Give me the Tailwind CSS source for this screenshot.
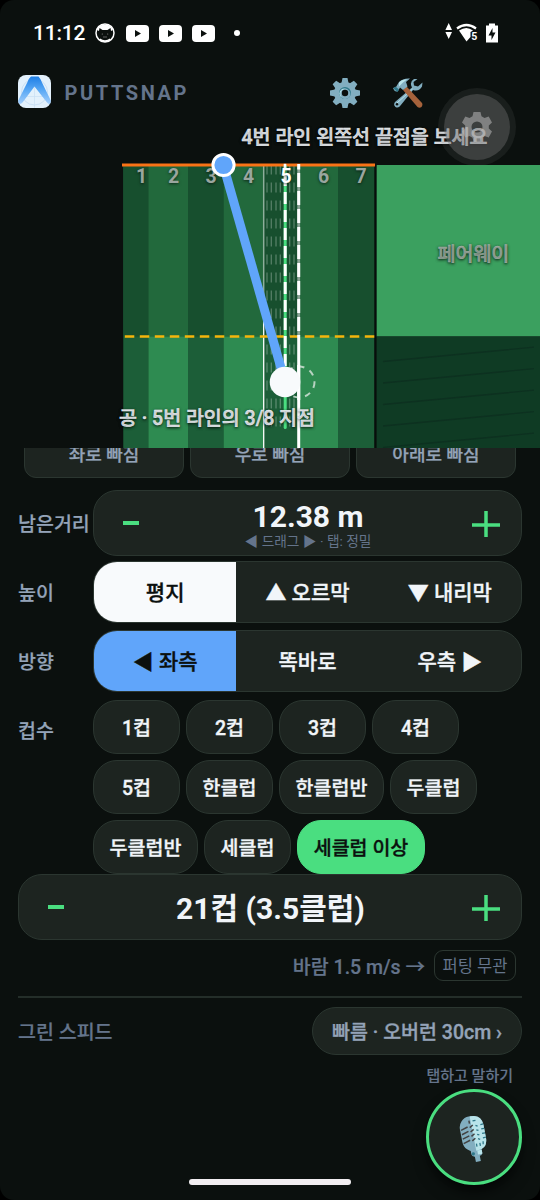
<!DOCTYPE html>
<html lang="ko">
<head>
<meta charset="utf-8">
<title>PuttSnap</title>
<script src="https://cdn.jsdelivr.net/npm/@tailwindcss/browser@4"></script>
</head>
<body class="bg-black">
<div class="relative flex h-[1200px] w-[540px] flex-col overflow-hidden rounded-[14px] bg-[#0b100e] font-['Roboto','Noto_Sans_CJK_KR',sans-serif] text-[19.5px] leading-none font-medium text-[#f1f5f9]">

  <!-- Status bar -->
  <div class="flex h-[66px] shrink-0 items-center pl-[33px] pr-[41px] text-white">
    <span class="w-[62px] text-[21px] font-medium tracking-[-0.2px]">11:12</span>
    <svg class="h-5 w-5" viewBox="0 0 20 20"><circle cx="10" cy="10" r="9" fill="#0b100e" stroke="#fff" stroke-width="1.500"/><path d="M2 7A8.600 8.600 0 0 1 18 7L16 8 15.500 5 12.500 7H7.500L4.500 5 4 8z" fill="#fff"/><path d="M5 15.500q5 3.500 10 0v2l-5 1.500-5-1.500z" fill="#fff"/><circle cx="7.300" cy="11" r=".6" fill="#888"/><circle cx="12.700" cy="11" r=".6" fill="#888"/><path d="M8 14h4" stroke="#777" stroke-width=".8"/></svg>
    <svg class="ml-[11px] h-[17px] w-[23px]" viewBox="0 0 23 17"><rect width="23" height="17" rx="4" fill="#fff"/><path d="M9 5l6 3.500L9 12z" fill="#0b100e"/></svg>
    <svg class="ml-[10px] h-[17px] w-[23px]" viewBox="0 0 23 17"><rect width="23" height="17" rx="4" fill="#fff"/><path d="M9 5l6 3.500L9 12z" fill="#0b100e"/></svg>
    <svg class="ml-[10px] h-[17px] w-[23px]" viewBox="0 0 23 17"><rect width="23" height="17" rx="4" fill="#fff"/><path d="M9 5l6 3.500L9 12z" fill="#0b100e"/></svg>
    <span class="ml-[19px] h-[6px] w-[6px] rounded-full bg-white"></span>
    <span class="flex-1"></span>
    <svg class="h-[20px] w-[54px]" viewBox="445 22 54 20"><path d="M448.700 22l3.300 7h-6.600zM448.700 38l3.300-7h-6.600z" fill="#fff"/><path d="M457 27.500q9.500-7 19 0" fill="none" stroke="#fff" stroke-width="2.200"/><path d="M459 29.500q7.500-5 14 0l-2.500 1.500v5l-4 4.500z" fill="#fff"/><text x="471.300" y="38.800" fill="#fff" font-size="10.500" font-weight="700">5</text><path d="M489 22.500h6v2h3v17h-12v-17h3z" fill="#fff"/><path d="M492.500 27l-4 7.500h3V39l4-7.500h-3z" fill="#0b100e"/></svg>
  </div>

  <!-- Header -->
  <div class="flex h-[54px] shrink-0 items-center pl-[18px] pr-[116px]">
    <svg class="-mt-[3px] h-[33px] w-[33px]" viewBox="0 0 33 33"><defs><linearGradient id="lg" x2="0" y2="1"><stop stop-color="#1f7fe6"/><stop offset=".5" stop-color="#5aa9f5"/><stop offset="1" stop-color="#a5cffb"/></linearGradient><clipPath id="lc"><rect width="33" height="33" rx="8"/></clipPath></defs><g clip-path="url(#lc)"><rect width="33" height="33" fill="#e3f1fc"/><circle cx="16.500" cy="17" r="13" fill="none" stroke="#c4dcf3" stroke-width=".8"/><path d="M16.500 12v21M3 21.500h27" stroke="#c9dff3" stroke-width=".7"/><path d="M13 1.500h7.500q2 2 3.500 6L33 26v3q-2 1-4-1.500L16.500 11.500 4.500 27.500Q2 30 0 28.500V26L9.500 7q1.500-4 3.500-5.500z" fill="url(#lg)"/></g></svg>
    <span class="ml-[13.5px] -mt-[1px] text-[20px] font-bold tracking-[2.6px] text-[#64748b]">PUTTSNAP</span>
    <span class="flex-1"></span>
    <svg class="-mt-[1px] h-[30px] w-[30px]" viewBox="-15 -15 30 30"><g fill="#82aec0"><circle r="11"/><g id="t"><path d="M-2.500-15h5l1 5h-7zM-2.500 15h5l1-5h-7z"/><path d="M-15-2.500v5l5 1v-7zM15-2.500v5l-5 1v-7z"/></g><use href="#t" transform="rotate(45)"/></g><circle r="6" fill="#2f7889"/><circle r="5" cx="-.6" cy=".5" fill="#b9e4ea"/><circle r="5" cx=".4" cy="1" fill="#82aec0"/><circle r="3.200" fill="#0b100e"/></svg>
    <svg class="-mt-[1px] ml-[33px] mr-[1px] h-[30px] w-[30px]" viewBox="0 0 30 30"><path d="M21 1q-5 3-2 8.500L2 24q-2 3 .5 5 3 1.500 5-1.500L20 12q6 2 9-3.500l.5-4-4.500 4-4-1-.5-3.500 4-3z" fill="#82aec0"/><path d="M4 25L19.500 11" stroke="#b9e4ea"/><circle cx="4" cy="26.200" r="1.200" fill="#0b100e"/><path d="M10 12l3.500-3.500L29 25q1 2-.5 4-2 1.500-4 0z" fill="#a6623b"/><path d="M0 10l3-1 3-5Q10 0 17 .5L13 4l1.500 4.500L10 12 7 9.500 5 13q-3 2-5-3z" fill="#82aec0"/><path d="M6 4.500Q9 1 14 1.500l-4 3-4 4z" fill="#b9e4ea"/><path d="M.5 10.500l4 3.500 1.500-2.500-3.500-3z" fill="#2f7889"/></svg>
  </div>

  <!-- Green map -->
  <svg class="h-[328px] w-[540px] shrink-0" viewBox="0 120 540 328">
    <path d="M123 166H376.500V448H123z" fill="#164a2c"/>
    <g fill="#174f2e"><path d="M124 166h24.500v170.500H124zM188 166h35.700v170.500H188zM263.700 166H299v170.500h-35.300zM338 166h36v170.500h-36z"/></g>
    <g fill="#22693c"><path d="M148.500 166H188v170.500h-39.500zM223.700 166h40v170.500h-40zM299 166h39v170.500h-39z"/></g>
    <g fill="#1c5e38"><path d="M124 336.500h24.500V448H124zM188 336.500h35.700V448H188zM263.700 336.500H299V448h-35.300zM338 336.500h36V448h-36z"/></g>
    <g fill="#2e8b51"><path d="M148.500 336.500H188V448h-39.500zM223.700 336.500h40V448h-40zM299 336.500h39V448h-39z"/></g>
    <path d="M374.300 165h2.400v283h-2.400z" fill="#080d0b"/>
    <path d="M376.700 165H540v171.500H376.700z" fill="#3ba05f"/>
    <path d="M376.700 336.500H540V448H376.700z" fill="#0f3b24"/>
    <path d="M383 361.500L534 347.200M383 383L534 368.700M383 404.500L534 390.200M383 426L534 411.700M383 447.500L534 433.200" stroke="#0d3120" stroke-width="1.300"/>
    <path d="M267 164.500V429M271.300 164.500V429M276 164.500V429M280.300 164.500V429M289.700 164.500V429M294 164.500V429" stroke="#fff" stroke-opacity=".27" stroke-width="1.300" stroke-dasharray="10 8"/>
    <path d="M263.700 166V319" stroke="#fff" stroke-opacity=".5" stroke-width="1.500"/><path d="M263.700 319V448" stroke="#fff" stroke-width="1.300"/>
    <path d="M124.800 336.500H375" stroke="#f5b50c" stroke-width="2.400" stroke-dasharray="9.500 5.500"/>
    <path d="M122 165H375" stroke="#f97316" stroke-width="3"/>
    <path d="M285.200 166V427.500" stroke="#4ade80" stroke-width="3" stroke-linecap="round"/>
    <path d="M285 163.800V168" stroke="#fff" stroke-width="2.600"/><path d="M285.200 174V370" stroke="#fff" stroke-width="3" stroke-dasharray="12 6"/>
    <path d="M298.700 166V336" stroke="#8fa698" stroke-width="2.800"/><path d="M298.700 173V336" stroke="#fff" stroke-width="3" stroke-dasharray="14 4"/><path d="M298.700 164v5.500" stroke="#fff" stroke-width="3"/><path d="M298.700 336V448" stroke="#fff" stroke-width="3"/>
    <g font-size="19.500" font-weight="700" fill="#9aa69f" style="text-shadow:0 1px 3px rgba(0,0,0,.6)" text-anchor="middle"><text x="141.500" y="182.500">1</text><text x="173.500" y="182.500">2</text><text x="211" y="182.500">3</text><text x="248.500" y="182.500">4</text><text x="286" y="182.500" fill="#fff">5</text><text x="323.500" y="182.500">6</text><text x="361" y="182.500">7</text></g>
    <circle cx="299" cy="382" r="15.500" fill="none" stroke="#b7d3c1" stroke-width="2" stroke-dasharray="6 6"/>
    <path d="M298.700 365V400" stroke="#fff" stroke-width="3"/>
    <path d="M223.500 166L285 382" stroke="#60a5fa" stroke-width="9"/>
    <circle cx="285" cy="382" r="15.300" fill="#f8fafc"/>
    <circle cx="223.500" cy="165" r="10.600" fill="#60a5fa" stroke="#fff" stroke-width="3"/>
    <g style="text-shadow:0 1px 3px rgba(0,0,0,.75)" fill="currentColor" stroke="currentColor" stroke-width=".45" font-size="19.500"><text x="241.500" y="144" textLength="246">4번 라인 왼쪽선 끝점을 보세요</text><text x="119" y="425" textLength="196">공 · 5번 라인의 3/8 지점</text><text x="437.500" y="261" fill="#a3b3a7" stroke="#a3b3a7">페어웨이</text></g>
  </svg>

  <!-- Miss direction buttons, scrolled under the map -->
  <div class="h-[42px] shrink-0 overflow-hidden px-6">
    <div class="-mt-[19px] flex gap-[6px] text-[18px] text-[#94a3b8] [-webkit-text-stroke:0.25px_currentColor]">
      <div class="flex h-[49px] flex-1 items-center justify-center rounded-[12px] border-[1.5px] border-[#2b3630] bg-[#1d2420] pt-[3px]">좌로 빠짐</div>
      <div class="flex h-[49px] flex-1 items-center justify-center rounded-[12px] border-[1.5px] border-[#2b3630] bg-[#1d2420] pt-[3px]">우로 빠짐</div>
      <div class="flex h-[49px] flex-1 items-center justify-center rounded-[12px] border-[1.5px] border-[#2b3630] bg-[#1d2420] pt-[3px]">아래로 빠짐</div>
    </div>
  </div>

  <!-- Remaining distance -->
  <div class="flex h-[66px] shrink-0 items-center pl-[18px] pr-[18px]">
    <span class="w-[75px] pt-[3px] whitespace-nowrap text-[#94a3b8] [-webkit-text-stroke:0.2px_currentColor]">남은거리</span>
    <div class="flex h-full flex-1 items-center rounded-[24px] border-[1.5px] border-[#2b3630] bg-[#1d2420] px-[28.5px]">
      <svg class="h-[28px] w-[28px]" viewBox="0 0 28 28"><path d="M0 14h16" stroke="#4ade80" stroke-width="4"/></svg>
      <div class="flex flex-1 flex-col items-center pt-[3px] pr-[6px]"><b class="text-[30px] leading-[33px] font-bold">12.38 m</b><span class="text-[13.7px] leading-[17px] font-normal text-[#64748b]">◀ 드래그 ▶ · 탭: 정밀</span></div>
      <svg class="mr-[-7px] h-[28px] w-[28px]" viewBox="0 0 28 28"><path d="M0 16h28M14 2v28" stroke="#4ade80" stroke-width="3.500"/></svg>
    </div>
  </div>

  <!-- Height -->
  <div class="mt-[5px] flex h-[62px] shrink-0 items-center px-[18px]">
    <span class="w-[75px] pt-[3px] text-[#94a3b8] [-webkit-text-stroke:0.2px_currentColor]">높이</span>
    <div class="grid h-full flex-1 grid-cols-3 overflow-hidden rounded-[24px] border-[1.5px] border-[#2b3630] bg-[#1d2420] text-[21px] [-webkit-text-stroke:0.35px_currentColor]">
      <div class="flex items-center justify-center bg-[#f8fafc] pt-[3px] text-[#0b100e]">평지</div>
      <div class="flex items-center justify-center pt-[3px]">▲ 오르막</div>
      <div class="flex items-center justify-center pt-[3px]">▼ 내리막</div>
    </div>
  </div>

  <!-- Direction -->
  <div class="mt-[7px] flex h-[62px] shrink-0 items-center px-[18px]">
    <span class="w-[75px] pt-[3px] text-[#94a3b8] [-webkit-text-stroke:0.2px_currentColor]">방향</span>
    <div class="grid h-full flex-1 grid-cols-3 overflow-hidden rounded-[24px] border-[1.5px] border-[#2b3630] bg-[#1d2420] text-[21px] [-webkit-text-stroke:0.35px_currentColor]">
      <div class="flex items-center justify-center bg-[#60a5fa] pt-[3px] text-[#0b100e]">◀ 좌측</div>
      <div class="flex items-center justify-center pt-[3px]">똑바로</div>
      <div class="flex items-center justify-center pt-[3px]">우측 ▶</div>
    </div>
  </div>

  <!-- Cup count -->
  <div class="mt-2 flex h-[174px] shrink-0 px-[18px]">
    <span class="w-[75px] pt-[22px] text-[#94a3b8] [-webkit-text-stroke:0.2px_currentColor]">컵수</span>
    <div class="flex flex-1 flex-col gap-[6px] [-webkit-text-stroke:0.35px_currentColor] [&>div]:flex [&>div]:gap-[6px] [&_span]:flex [&_span]:h-[54px] [&_span]:items-center [&_span]:justify-center [&_span]:rounded-[24px] [&_span]:border-[1.5px] [&_span]:pt-[4px] [&_span]:whitespace-nowrap">
      <div><span class="w-[87px] border-[#2b3630] bg-[#1d2420]">1컵</span><span class="w-[87px] border-[#2b3630] bg-[#1d2420]">2컵</span><span class="w-[87px] border-[#2b3630] bg-[#1d2420]">3컵</span><span class="w-[87px] border-[#2b3630] bg-[#1d2420]">4컵</span></div>
      <div><span class="w-[87px] border-[#2b3630] bg-[#1d2420]">5컵</span><span class="w-[87px] border-[#2b3630] bg-[#1d2420]">한클럽</span><span class="w-[105px] border-[#2b3630] bg-[#1d2420]">한클럽반</span><span class="w-[87px] border-[#2b3630] bg-[#1d2420]">두클럽</span></div>
      <div><span class="w-[105px] border-[#2b3630] bg-[#1d2420]">두클럽반</span><span class="w-[87px] border-[#2b3630] bg-[#1d2420]">세클럽</span><span class="w-[128px] border-[#4ade80] bg-[#4ade80] text-[#0b100e]">세클럽 이상</span></div>
    </div>
  </div>

  <!-- Total -->
  <div class="mx-[18px] flex h-[66px] shrink-0 items-center rounded-[24px] border-[1.5px] border-[#2b3630] bg-[#1d2420] px-[28.5px]">
    <svg class="h-[28px] w-[28px]" viewBox="0 0 28 28"><path d="M0 14h16" stroke="#4ade80" stroke-width="4"/></svg>
    <b class="flex-1 pt-[4px] pr-[6px] text-center text-[30px] font-bold">21컵 (3.5클럽)</b>
    <svg class="mr-[-7px] h-[28px] w-[28px]" viewBox="0 0 28 28"><path d="M0 16h28M14 2v28" stroke="#4ade80" stroke-width="3.500"/></svg>
  </div>

  <!-- Wind -->
  <div class="mt-[10px] flex h-[31px] shrink-0 items-center justify-end gap-[9px] pr-6 text-[#64748b]">
    <span class="pt-[4px] [-webkit-text-stroke:0.2px_currentColor]">바람 1.5 m/s →</span>
    <span class="flex h-[31px] w-[82px] items-center justify-center rounded-[9px] border-[1.5px] border-[#2b3630] pt-[3px] text-[16.5px] font-normal">퍼팅 무관</span>
  </div>
  <div class="mx-[18px] mt-[15px] h-[2px] shrink-0 bg-[#242e29]"></div>

  <!-- Green speed -->
  <div class="mt-[9px] flex h-[48px] shrink-0 items-center justify-between px-[18px]">
    <span class="pt-[3px] text-[#64748b] [-webkit-text-stroke:0.2px_currentColor]">그린 스피드</span>
    <span class="flex h-full w-[210px] items-center justify-center rounded-full border-[1.5px] border-[#2b3630] bg-[#1d2420] pt-[4px] text-[#94a3b8] [-webkit-text-stroke:0.35px_currentColor]">빠름 · 오버런 30cm ›</span>
  </div>

  <!-- Voice input -->
  <div class="mt-[11px] flex shrink-0 flex-col items-end pr-[18px]">
    <span class="mr-[9px] h-[23px] text-[15px] leading-[20px] text-[#64748b] [-webkit-text-stroke:0.15px_currentColor]">탭하고 말하기</span>
    <div class="flex h-[96px] w-[96px] items-center justify-center rounded-full border-[3px] border-[#4ade80] bg-[#1d2420] shadow-lg shadow-black/60">
      <svg class="mt-[3px] h-[48px] w-[32px]" viewBox="0 0 32 48"><g transform="rotate(-11 16 24)"><path d="M10.500 34h11v5q-.5 2.500-3 2.500V47h-5v-5.500q-3-.5-3-3z" fill="#82aec0"/><rect x="4" y="1" width="24" height="35" rx="11" fill="#82aec0"/><path d="M16 1h1q11 0 11 11v13q0 11-11 11h-1z" fill="#b9e4ea"/><path d="M17 36h4.500v4h-4.500z" fill="#b9e4ea"/><circle cx="12.500" cy="38.500" r="1.600" fill="#2f7889"/><path d="M5 13l7-2M5 17.500l7-2M5 22l7-2M5 26.500l7-2M14.500 8V5M14 12l3.500-2M14 16.500l3.500-2M14 21l3.500-2M14 25.500l3.500-2" stroke="#424242" stroke-width="1.500"/><path d="M20 11l2 1M25 11h3M20 15.500l2 1M25 15.500h3M20 20l2 1M25 20h3M20 24.500l2 1M25 24.500h3M17.500 29v3M21 29v3M24.500 28l-.5 3M18 6h3" stroke="#2f7889" stroke-width="1.300"/></g></svg>
    </div>
  </div>

  <!-- Home indicator -->
  <div class="absolute top-[1179px] left-[189px] h-[6px] w-[162px] rounded-full bg-[#f1edf0]"></div>

  <!-- Floating settings bubble -->
  <div class="absolute top-[88px] left-[438px] flex h-[78px] w-[78px] items-center justify-center rounded-full bg-[#808080]/12">
    <div class="absolute inset-[6px] rounded-full bg-[#6e6e6e]/42"></div>
    <svg class="relative h-[30px] w-[30px]" viewBox="-15 -15 30 30"><path fill="#b8b8b8" fill-opacity=".55" fill-rule="evenodd" d="M-3.500-15h7l1 4.200 3 1.700 4.200-1.400 3.300 6-3.200 3v3l3.200 3-3.300 6-4.200-1.400-3 1.700-1 4.200h-7l-1-4.200-3-1.700-4.200 1.400-3.300-6 3.200-3v-3l-3.200-3 3.300-6 4.200 1.400 3-1.700zM0-5.500a5.500 5.500 0 1 0 0 11 5.500 5.500 0 0 0 0-11z"/></svg>
  </div>
</div>
</body>
</html>
